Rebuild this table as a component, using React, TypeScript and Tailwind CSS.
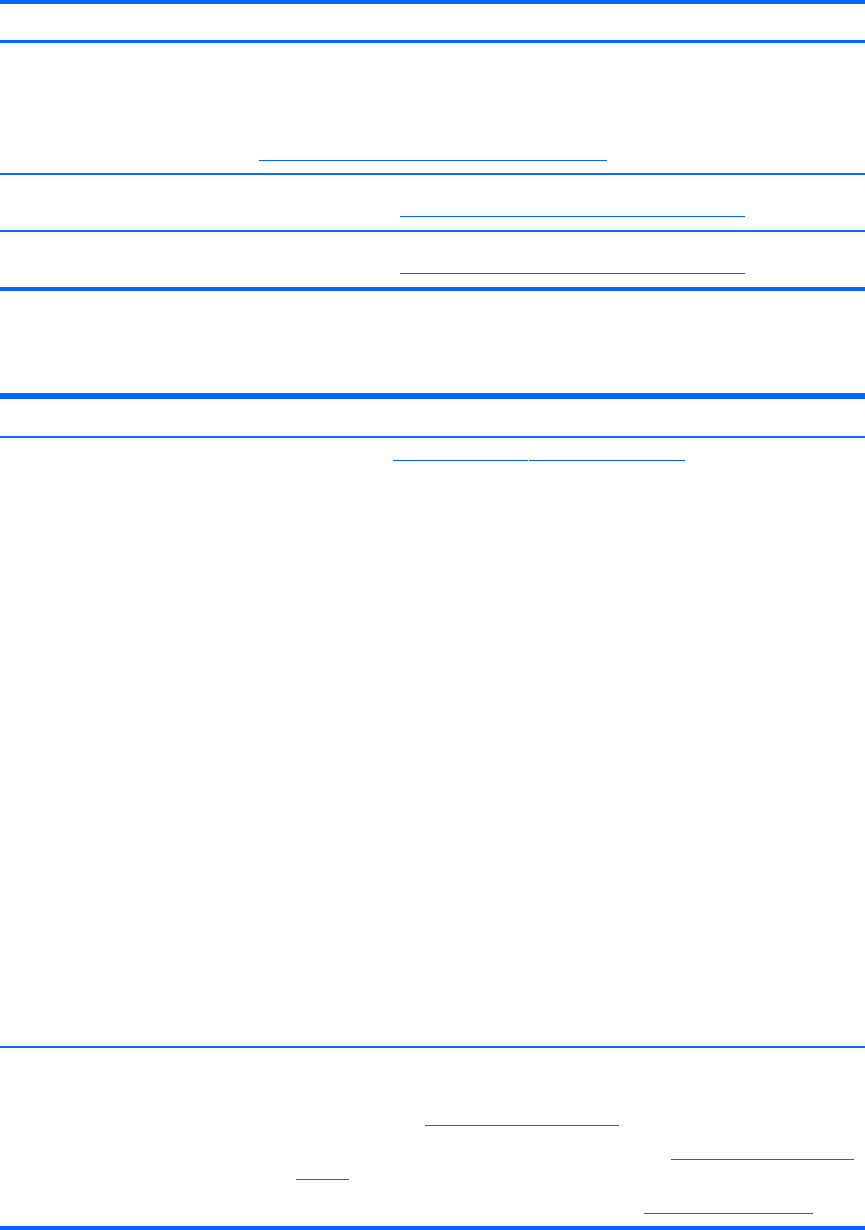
import React from 'react';

const thick = 'w-full bg-[#0066ff]';
const rule = 'w-full h-[2px] bg-[#0a6cff]';

function Link({ className }: { className: string }) {
  return <span className={`block h-px ${className}`} />;
}

export default function App() {
  return (
    <div className="w-[865px] h-[1230px] bg-white flex flex-col font-['Liberation_Sans',sans-serif]">
      {/* first table */}
      <div className={`${thick} h-[4px]`} />
      <div className="h-[36px]" />
      <div className={`${thick} h-[3px]`} />

      <div className="pt-[117px] pb-[12px]">
        <Link className="ml-[259px] w-[348px] bg-[#0066ff]" />
      </div>
      <div className={rule} />

      <div className="pt-[41px] pb-[13px]">
        <Link className="ml-[400px] w-[345px] bg-[#0066ff]" />
      </div>
      <div className={rule} />

      <div className="pt-[41px] pb-[13px]">
        <Link className="ml-[400px] w-[345px] bg-[#0066ff]" />
      </div>
      <div className={`${thick} h-[4px]`} />

      <div className="h-[102px]" />

      {/* second table */}
      <div className={`${thick} h-[6px]`} />
      <div className="h-[37px]" />
      <div className={rule} />

      <div className="pt-[22px] h-[608px]">
        <div className="flex ml-[393px] gap-px">
          <Link className="w-[135px] bg-[#0066ff]" />
          <Link className="w-[156px] bg-[#0066ff]" />
        </div>
      </div>
      <div className={rule} />

      <div className="pt-[77px] pb-[12px] flex flex-col">
        <Link className="ml-[425px] w-[194px] bg-[#1463e6]" />
        <div className="h-[33px]" />
        <Link className="ml-[671px] w-[183px] bg-[#1463e6]" />
        <div className="h-[19px]" />
        <Link className="ml-[296px] w-[53px] bg-[#1463e6]" />
        <div className="h-[33px]" />
        <Link className="ml-[644px] w-[169px] bg-[#1463e6]" />
      </div>
      <div className={`${thick} h-[4px]`} />
    </div>
  );
}
